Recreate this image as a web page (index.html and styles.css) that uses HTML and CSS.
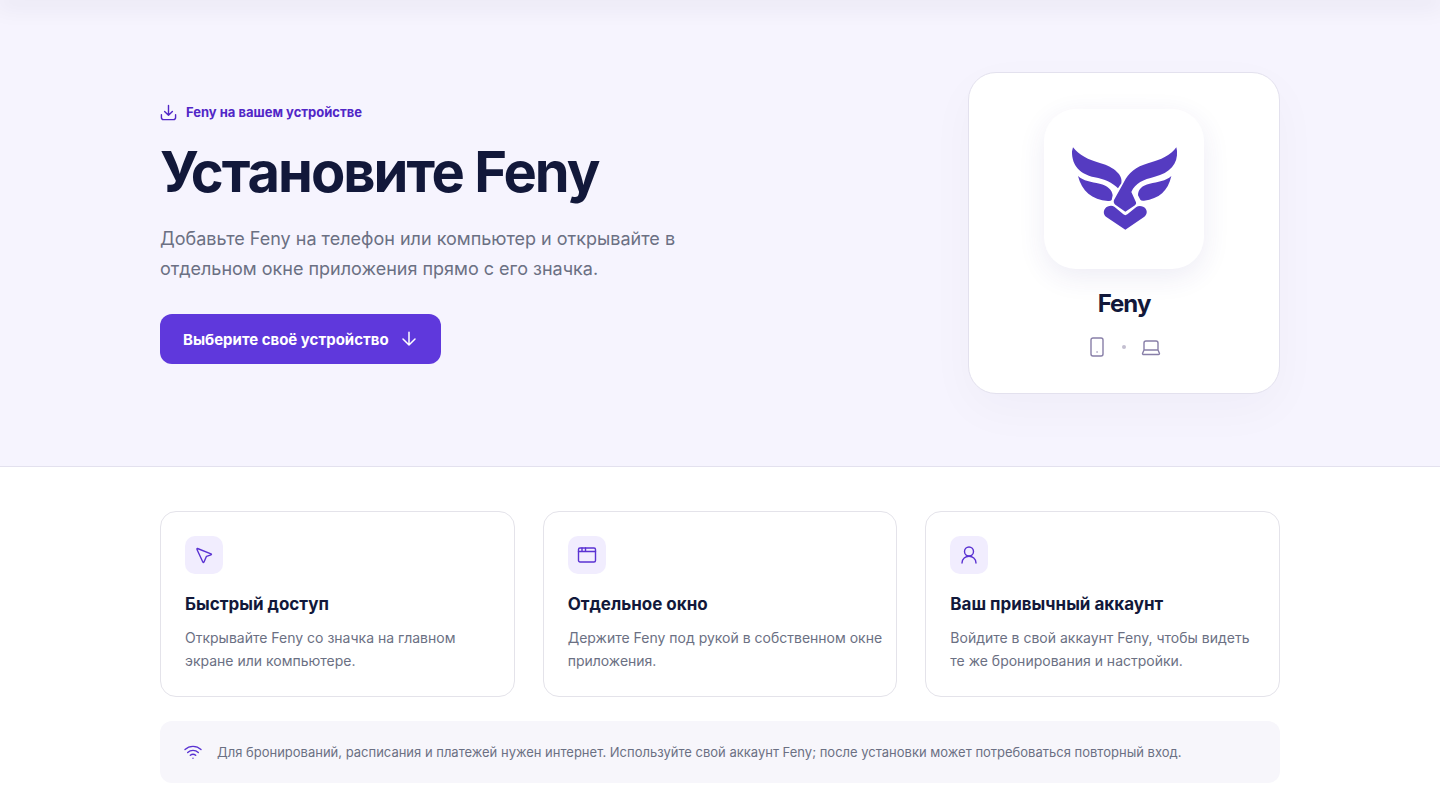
FILE: index.html
```html
<!DOCTYPE html>
<html lang="ru">
<head>
    <meta charset="UTF-8">
    <meta name="viewport" content="width=device-width, initial-scale=1.0">
    <title>Установите Feny</title>
    <link rel="stylesheet" href="styles.css">
</head>
<body>

<header class="topbar"></header>

<main>
    <section class="hero">
        <div class="container hero-inner">
            <div class="hero-text">
                <p class="eyebrow">
                    <svg class="icon" width="17" height="17" viewBox="0 0 24 24"><path d="M12 2v14M6.500 10.500 12 16l5.500-5.500M2 15v4a3 3 0 0 0 3 3h14a3 3 0 0 0 3-3v-4"/></svg>
                    Feny на вашем устройстве
                </p>
                <h1>Установите Feny</h1>
                <p class="lead">Добавьте Feny на телефон или компьютер и открывайте в отдельном окне приложения прямо с его значка.</p>
                <button type="button" class="choose">
                    Выберите своё устройство
                    <svg class="icon" width="18" height="18" viewBox="0 0 24 24"><path d="M12 3v17M4 12l8 8 8-8"/></svg>
                </button>
            </div>

            <div class="app-card">
                <div class="app-logo">
                    <svg width="120" height="96" viewBox="0 3 360 288">
                        <path d="M27 22C45 46 72 59 110 70C150 81 178 106 172 130L162 145C145 128 122 118 92 112C50 104 23 78 24 34Z"/>
                        <path d="M337 22C321 46 292 59 252 70C216 80 193 100 180 126L150 180Q147 189 155 195L184 215L213 196Q218 192 216 187L202 156C214 128 238 119 272 110C318 98 342 72 339 32Z"/>
                        <path d="M42 108C58 123 82 126 107 131C130 136 145 150 146 166L143 180Q140 184 132 183C84 180 53 153 42 108Z"/>
                        <path d="M322 108C306 123 281 126 257 131C234 136 222 148 222 166L229 179Q232 183 240 182C286 176 312 153 322 108Z"/>
                        <path d="M151 200L178 223Q184 228 190 223L217 201C225 195 239 198 245 206C251 215 248 225 240 231L184 269L127 231C119 225 117 214 123 206C130 197 143 195 151 200Z"/>
                    </svg>
                </div>
                <h2>Feny</h2>
                <div class="devices">
                    <svg class="icon" width="20" height="20" viewBox="0 0 20 20"><rect x="4" y="1" width="12" height="18" rx="2"/><path d="M10 15h.1"/></svg>
                    <span class="dot"></span>
                    <svg class="icon" width="20" height="20" viewBox="0 0 20 20"><path d="M3 13V6a2 2 0 0 1 2-2h10a2 2 0 0 1 2 2v7M3 13h14l1.500 3.500a1 1 0 0 1-1 1h-15a1 1 0 0 1-1-1Z"/></svg>
                </div>
            </div>
        </div>
    </section>

    <section class="container features">
        <div class="cards">
            <article class="card">
                <div class="card-icon">
                    <svg class="icon" width="20" height="20" viewBox="0 0 20 20"><path d="M3.500 3.500 17 8.800q1 .5 0 1l-4.500 1.500-2.500 5.700q-.6 1-1.200 0L3 4.500Q2.800 3.300 3.500 3.500Z"/></svg>
                </div>
                <h3>Быстрый доступ</h3>
                <p>Открывайте Feny со значка на главном экране или компьютере.</p>
            </article>
            <article class="card">
                <div class="card-icon">
                    <svg class="icon" width="20" height="20" viewBox="0 0 20 20"><rect x="1.500" y="3" width="17" height="14" rx="1.500"/><path d="M1.500 6.500h17M5 3v3.500M8.500 3v3.500"/></svg>
                </div>
                <h3>Отдельное окно</h3>
                <p>Держите Feny под рукой в собственном окне приложения.</p>
            </article>
            <article class="card">
                <div class="card-icon">
                    <svg class="icon" width="20" height="20" viewBox="0 0 20 20"><circle cx="10" cy="6.500" r="4.500"/><path d="M3 18c0-9 14-9 14 0"/></svg>
                </div>
                <h3>Ваш привычный аккаунт</h3>
                <p>Войдите в свой аккаунт Feny, чтобы видеть те же бронирования и настройки.</p>
            </article>
        </div>

        <div class="note">
            <svg class="icon" width="18" height="18" viewBox="0 0 18 18"><path d="M1 6.500C5.500 2.300 12.500 2.300 17 6.500M3.700 9.500c3-2.800 7.600-2.800 10.600 0M6.300 12.300c1.600-1.300 3.800-1.300 5.400 0M9 15.200v.1"/></svg>
            <p>Для бронирований, расписания и платежей нужен интернет. Используйте свой аккаунт Feny; после установки может потребоваться повторный вход.</p>
        </div>
    </section>
</main>

</body>
</html>
```
FILE: styles.css
```css
* {
    box-sizing: border-box;
}

body {
    margin: 0;
    font-family: Inter, "Liberation Sans", sans-serif;
    color: #12183a;
    background-color: #fff;
}

h1, h2, h3, p {
    margin: 0;
}

.topbar {
    position: relative;
    height: 0;
    box-shadow: 0 0 24px 4px rgba(18, 24, 58, 0.12);
}

.container {
    width: 100%;
    max-width: 1168px;
    margin: 0 auto;
    padding: 0 24px;
}

.icon {
    flex: none;
    fill: none;
    stroke: currentColor;
    stroke-width: 1.4;
    stroke-linecap: round;
    stroke-linejoin: round;
}

.hero {
    padding: 72px 0;
    background-color: #f6f4fe;
    border-bottom: 1px solid #e3e1ee;
}

.hero-inner {
    display: flex;
    align-items: center;
    justify-content: space-between;
    gap: 48px;
}

.hero-text {
    max-width: 560px;
}

.eyebrow {
    display: flex;
    align-items: center;
    gap: 9px;
    font-size: 13px;
    line-height: 20px;
    font-weight: 700;
    color: #5126c7;
}

.eyebrow .icon,
.choose .icon {
    stroke-width: 2;
}

h1 {
    margin-top: 20px;
    font-size: 56px;
    line-height: 60px;
    font-weight: 700;
    letter-spacing: -2px;
}

.lead {
    max-width: 540px;
    margin-top: 22px;
    font-size: 18px;
    line-height: 30px;
    color: #6b7083;
}

.choose {
    display: inline-flex;
    align-items: center;
    gap: 11px;
    height: 50px;
    margin-top: 30px;
    padding: 0 23px;
    border: none;
    border-radius: 12px;
    font-family: inherit;
    font-size: 15px;
    font-weight: 700;
    color: #fff;
    background-color: #5f38dc;
    cursor: pointer;
}

.choose:hover {
    background-color: #5126c7;
}

.app-card {
    display: flex;
    flex: none;
    flex-direction: column;
    align-items: center;
    width: 312px;
    padding: 36px;
    border: 1px solid #e3e1ee;
    border-radius: 28px;
    background-color: #fff;
    box-shadow: 0 16px 48px rgba(18, 24, 58, 0.03);
}

.app-logo {
    display: flex;
    align-items: center;
    justify-content: center;
    width: 160px;
    height: 160px;
    border-radius: 32px;
    background-color: #fff;
    box-shadow: 0 8px 28px rgba(60, 40, 140, 0.09);
}

.app-logo svg {
    fill: #553bc1;
}

h2 {
    margin-top: 19px;
    font-size: 24px;
    line-height: 32px;
    font-weight: 700;
    letter-spacing: -1px;
}

.devices {
    display: flex;
    align-items: center;
    gap: 15px;
    margin-top: 17px;
    color: #887fa8;
}

.dot {
    width: 4px;
    height: 4px;
    border-radius: 50%;
    background-color: #c3bfd0;
}

.features {
    padding-top: 44px;
    padding-bottom: 16px;
}

.cards {
    display: grid;
    grid-template-columns: repeat(3, 1fr);
    gap: 28px;
}

.card {
    padding: 24px 14px 24px 24px;
    border: 1px solid #e4e3ea;
    border-radius: 16px;
    background-color: #fff;
}

.card-icon {
    display: flex;
    align-items: center;
    justify-content: center;
    width: 38px;
    height: 38px;
    border-radius: 10px;
    color: #5a32d2;
    background-color: #f1edfe;
}

h3 {
    margin-top: 18px;
    font-size: 17px;
    line-height: 24px;
    font-weight: 700;
}

.card p {
    margin-top: 10px;
    font-size: 14px;
    line-height: 23px;
    color: #6b7083;
}

.note {
    display: flex;
    align-items: center;
    gap: 15px;
    margin-top: 24px;
    padding: 20px 24px;
    border-radius: 12px;
    background-color: #f7f6fb;
    color: #5a32d2;
}

.note p {
    font-size: 13px;
    line-height: 22px;
    color: #6b7083;
}
```
